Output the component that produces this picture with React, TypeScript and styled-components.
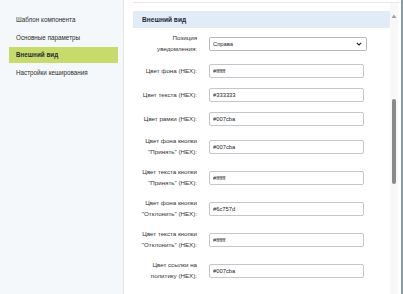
import React from 'react';
import styled, { createGlobalStyle } from 'styled-components';

const GlobalStyle = createGlobalStyle`
  html, body {
    margin: 0;
    padding: 0;
    background: #ffffff;
  }

  body {
    font-family: "Liberation Sans", Arial, sans-serif;
    color: #333333;
  }
`;

type Field = {
  label: string;
  value: string;
  select?: boolean;
};

const menu = ['Шаблон компонента', 'Основные параметры', 'Внешний вид', 'Настройки кеширования'];

const fields: Field[] = [
  { label: 'Позиция\nуведомления:', value: 'Справа', select: true },
  { label: 'Цвет фона (HEX):', value: '#ffffff' },
  { label: 'Цвет текста (HEX):', value: '#333333' },
  { label: 'Цвет рамки (HEX):', value: '#007cba' },
  { label: 'Цвет фона кнопки\n"Принять" (HEX):', value: '#007cba' },
  { label: 'Цвет текста кнопки\n"Принять" (HEX):', value: '#ffffff' },
  { label: 'Цвет фона кнопки\n"Отклонить" (HEX):', value: '#6c757d' },
  { label: 'Цвет текста кнопки\n"Отклонить" (HEX):', value: '#ffffff' },
  { label: 'Цвет ссылки на\nполитику (HEX):', value: '#007cba' },
  { label: 'Отображать кнопку\n"Отклонить":\n', value: '' },
];

export default function App() {
  return (
    <Page>
      <GlobalStyle />
      <Sidebar>
        {menu.map(item => (
          <MenuItem key={item} active={item === 'Внешний вид'}>{item}</MenuItem>
        ))}
      </Sidebar>

      <Main>
        <Content>
          <SectionHeader>Внешний вид</SectionHeader>
          <Form>
            {fields.map((f, i) => (
              <Row key={i}>
                <Label>{f.label}</Label>
                {f.select ? (
                  <SelectBox>
                    <span>{f.value}</span>
                    <svg width="6" height="4" viewBox="0 0 6 4">
                      <path d="M0.8 0.8 L3 3 L5.2 0.8" fill="none" stroke="#222" strokeWidth="1.1" />
                    </svg>
                  </SelectBox>
                ) : (
                  <Input readOnly value={f.value} />
                )}
              </Row>
            ))}
          </Form>
        </Content>

        <ScrollTrack>
          <svg width="6" height="5" viewBox="0 0 6 5">
            <path d="M3 0.5 L5.5 4 L0.5 4 Z" fill="#a3a3a3" />
          </svg>
          <Thumb />
        </ScrollTrack>
      </Main>
    </Page>
  );
}

const Page = styled.div`
  display: flex;
  flex-direction: row;
  height: 294px;
  overflow: hidden;
  border-right: 2px solid #8d9aa4;
  box-sizing: border-box;
`;

const Sidebar = styled.nav`
  width: 124px;
  flex-shrink: 0;
  box-sizing: border-box;
  background: #f5f8fa;
  border-right: 1px solid #e1e5e9;
  padding: 12px 5px 0 9px;
  display: flex;
  flex-direction: column;
  gap: 1.5px;
`;

const MenuItem = styled.div<{ active?: boolean }>`
  height: 16px;
  line-height: 16px;
  padding-left: 7px;
  font-size: 6.3px;
  color: #2c2c2c;
  font-weight: ${p => (p.active ? 'bold' : 'normal')};
  background: ${p => (p.active ? '#c7db6d' : 'transparent')};
`;

const Main = styled.main`
  flex: 1;
  margin: 2px 0 0 9px;
  border-top: 1px solid #e8e8e8;
  display: flex;
  flex-direction: row;
  min-width: 0;
`;

const Content = styled.section`
  flex: 1;
  padding-top: 8px;
  min-width: 0;
`;

const SectionHeader = styled.h2`
  margin: 0;
  height: 17px;
  line-height: 17px;
  padding-left: 9px;
  background: #e2ecf7;
  font-size: 6.6px;
  font-weight: bold;
  color: #1e2a36;
`;

const Form = styled.div`
  display: flex;
  flex-direction: column;
`;

const Row = styled.div`
  display: flex;
  flex-direction: row;
  align-items: center;
  padding: 5px 0;
  gap: 12px;
`;

const Label = styled.div`
  width: 64px;
  flex-shrink: 0;
  text-align: right;
  white-space: pre-line;
  font-size: 6.2px;
  line-height: 10.5px;
  color: #333333;
`;

const Input = styled.input`
  width: 155px;
  height: 14px;
  box-sizing: border-box;
  border: 1px solid #c3c7cb;
  border-radius: 2px;
  padding: 0 0 0 3px;
  margin: 0;
  font-family: "Liberation Sans", Arial, sans-serif;
  font-size: 5.8px;
  color: #222222;
  background: #ffffff;
  outline: none;
`;

const SelectBox = styled.div`
  width: 158px;
  height: 14px;
  box-sizing: border-box;
  border: 1px solid #b4b8bc;
  border-radius: 2px;
  padding: 0 4px 0 3px;
  display: flex;
  align-items: center;
  justify-content: space-between;
  font-size: 5.8px;
  color: #222222;
`;

const ScrollTrack = styled.div`
  width: 8px;
  margin-right: 3px;
  background: #f8f8f8;
  display: flex;
  flex-direction: column;
  align-items: center;
  padding-top: 11px;
  box-sizing: border-box;
`;

const Thumb = styled.div`
  width: 4.5px;
  height: 85px;
  margin-top: 80px;
  border-radius: 3px;
  background: #8a8a8a;
`;
